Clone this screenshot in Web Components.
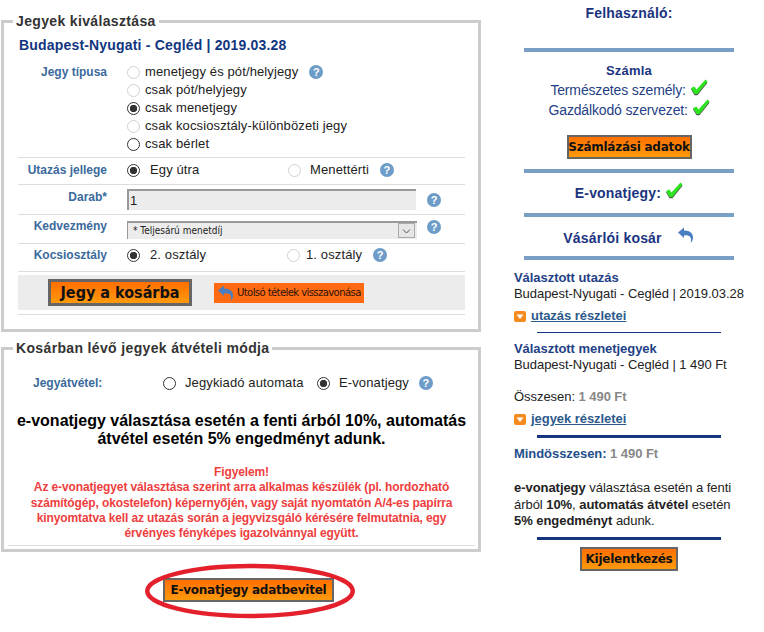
<!DOCTYPE html>
<html lang="hu">
<head>
<meta charset="utf-8">
<title>Jegyek</title>
<style>
    html, body { margin: 0; background: #fff; }
    body { font: 12px "Liberation Sans", Arial, sans-serif; color: #222; }
    ticket-page { width: 764px; height: 632px; }
</style>
</head>
<body>
<ticket-page>
    <ticket-panel legend="Jegyek kiválasztása" pad="14" style="height: 319px">
        <route-line>Budapest-Nyugati - Cegléd | 2019.03.28</route-line>
        <form-row label="Jegy típusa" height="104" top="9">
            <radio-list>
                <radio-item disabled>menetjegy és pót/helyjegy<help-icon style="margin-left:11px"></help-icon></radio-item>
                <radio-item disabled>csak pót/helyjegy</radio-item>
                <radio-item checked>csak menetjegy</radio-item>
                <radio-item disabled>csak kocsiosztály-különbözeti jegy</radio-item>
                <radio-item>csak bérlet</radio-item>
            </radio-list>
        </form-row>
        <form-row label="Utazás jellege" height="27" top="3">
            <radio-pair first="161">
                <radio-item checked gap="10" slot="a">Egy útra</radio-item>
                <radio-item disabled gap="9" slot="b">Menettérti<help-icon style="margin-left:11px"></help-icon></radio-item>
            </radio-pair>
        </form-row>
        <form-row label="Darab*" height="30" top="3">
            <fake-input>1</fake-input>
        </form-row>
        <form-row label="Kedvezmény" height="29" top="2">
            <fake-select>* Teljesárú menetdíj</fake-select>
        </form-row>
        <form-row label="Kocsiosztály" height="28" top="2">
            <radio-pair first="160">
                <radio-item checked gap="10" slot="a">2. osztály</radio-item>
                <radio-item disabled gap="6" slot="b">1. osztály<help-icon style="margin-left:11px"></help-icon></radio-item>
            </radio-pair>
        </form-row>
        <action-band>
            <orange-button size="big">Jegy a kosárba</orange-button>
            <undo-button>Utolsó tételek visszavonása</undo-button>
        </action-band>
    </ticket-panel>

    <ticket-panel legend="Kosárban lévő jegyek átvételi módja" pad="4" style="height: 212px; margin-top: 8px">
        <pickup-row>
            <radio-item gap="9" slot="a">Jegykiadó automata</radio-item>
            <radio-item checked gap="9" slot="b">E-vonatjegy<help-icon style="margin-left:10px"></help-icon></radio-item>
        </pickup-row>
        <discount-note>e-vonatjegy választása esetén a fenti árból 10%, automatás átvétel esetén 5% engedményt adunk.</discount-note>
        <warning-note>Figyelem!<br>Az e-vonatjegyet választása szerint arra alkalmas készülék (pl. hordozható számítógép, okostelefon) képernyőjén, vagy saját nyomtatón A/4-es papírra kinyomtatva kell az utazás során a jegyvizsgáló kérésére felmutatnia, egy érvényes fényképes igazolvánnyal együtt.</warning-note>
    </ticket-panel>

    <circled-action>
        <orange-button size="mid">E-vonatjegy adatbevitel</orange-button>
    </circled-action>

    <side-bar slot="side"></side-bar>
</ticket-page>

<script>
const ORANGE = 'linear-gradient(#ff6f00, #ff9a0c)';

class TicketPage extends HTMLElement {
    constructor() {
        super();
        this.attachShadow({ mode: 'open' }).innerHTML = `
            <style>
                :host { display: grid; grid-template-columns: 524px 210px; align-items: start; }
                .left { padding: 13px 0 0 1px; width: 480px; }
            </style>
            <div class="left"><slot></slot></div>
            <slot name="side"></slot>`;
    }
}

class TicketPanel extends HTMLElement {
    constructor() {
        super();
        const pad = Number(this.getAttribute('pad'));
        const right = pad === 14 ? 13 : 3;
        this.attachShadow({ mode: 'open' }).innerHTML = `
            <style>
                :host { display: block; box-sizing: border-box; }
                fieldset { margin: 0; height: 100%; box-sizing: border-box; border: 3px solid #ccc; padding: 0 ${right}px 0 ${pad}px; min-width: 0; }
                legend { margin-left: ${9 - pad}px; padding: 0 3px; font: bold 14px/17px "Liberation Sans", sans-serif; color: #333; letter-spacing: .35px; }
            </style>
            <fieldset><legend>${this.getAttribute('legend')}</legend><slot></slot></fieldset>`;
    }
}

class RouteLine extends HTMLElement {
    constructor() {
        super();
        this.attachShadow({ mode: 'open' }).innerHTML = `
            <style>
                :host { display: block; font: bold 14px/18px "Liberation Sans", sans-serif; color: #12357f; padding: 6px 0 0 1px; letter-spacing: .18px; }
            </style><slot></slot>`;
    }
}

class FormRow extends HTMLElement {
    constructor() {
        super();
        const h = this.getAttribute('height');
        const top = this.getAttribute('top') || 5;
        this.attachShadow({ mode: 'open' }).innerHTML = `
            <style>
                :host { display: grid; grid-template-columns: 89px 1fr; column-gap: 20px; box-sizing: border-box; height: ${h}px; border-bottom: 1px solid #ddd; padding-top: ${top}px; }
                .label { text-align: right; font: bold 12px/18px "Liberation Sans", sans-serif; color: #3b6a9c; }
            </style>
            <div class="label">${this.getAttribute('label')}</div>
            <div><slot></slot></div>`;
    }
}

class RadioList extends HTMLElement {
    constructor() {
        super();
        this.attachShadow({ mode: 'open' }).innerHTML = `
            <style>:host { display: flex; flex-direction: column; }</style><slot></slot>`;
    }
}

class RadioItem extends HTMLElement {
    constructor() {
        super();
        const off = this.hasAttribute('disabled');
        const on = this.hasAttribute('checked');
        const gap = this.getAttribute('gap') || 5;
        this.attachShadow({ mode: 'open' }).innerHTML = `
            <style>
                :host { display: flex; align-items: center; height: 18px; font: 13px/18px "Liberation Sans", sans-serif; color: #222; letter-spacing: .12px; white-space: nowrap; }
                i { flex: none; box-sizing: border-box; width: 13px; height: 13px; border-radius: 50%; margin-right: ${gap}px;
                    border: 1px solid ${off ? '#d0d0d0' : '#333'}; background: ${on ? 'radial-gradient(circle, #333 3.4px, #fff 4px)' : '#fff'}; }
            </style>
            <i></i><slot></slot>`;
    }
}

class RadioPair extends HTMLElement {
    constructor() {
        super();
        this.attachShadow({ mode: 'open' }).innerHTML = `
            <style>
                :host { display: grid; grid-template-columns: ${this.getAttribute('first')}px 1fr; }
            </style>
            <slot name="a"></slot><slot name="b"></slot>`;
    }
}

class HelpIcon extends HTMLElement {
    constructor() {
        super();
        this.attachShadow({ mode: 'open' }).innerHTML = `
            <style>
                :host { display: inline-flex; align-items: center; justify-content: center; width: 14px; height: 14px; border-radius: 50%; background: #6e9cc8; color: #fff; font: bold 11px/14px "Liberation Sans", sans-serif; flex: none; }
            </style>?`;
    }
}

class FakeInput extends HTMLElement {
    constructor() {
        super();
        this.attachShadow({ mode: 'open' }).innerHTML = `
            <style>
                :host { display: flex; align-items: center; gap: 11px; margin-top: 1px; }
                div { box-sizing: border-box; width: 289px; height: 21px; background: #ececec; border-top: 2px solid #999; border-left: 2px solid #999; padding: 3px 1px 0; font: 13px/14px "Liberation Sans", sans-serif; color: #222; }
            </style>
            <div><slot></slot></div><help-icon></help-icon>`;
    }
}

class FakeSelect extends HTMLElement {
    constructor() {
        super();
        this.attachShadow({ mode: 'open' }).innerHTML = `
            <style>
                :host { display: flex; align-items: flex-start; gap: 10px; margin-top: 4px; }
                div { box-sizing: border-box; width: 290px; height: 18px; background: #ececec; border-top: 2px solid #999; border-left: 1px solid #999; display: flex; justify-content: space-between; padding-left: 5px; font: 10px/16px "DejaVu Sans Condensed", "DejaVu Sans", sans-serif; font-stretch: condensed; color: #222; }
                b { box-sizing: border-box; width: 17px; height: 15px; margin-right: 2px; border: 1px solid #a9a9a9; background: #e6e6e6; display: flex; align-items: center; justify-content: center; }
                help-icon { margin-top: -1px; }
            </style>
            <div><span><slot></slot></span><b><svg width="9" height="6" viewBox="0 0 9 6"><path d="M1 1.5l3.5 3.5 3.5-3.5" fill="none" stroke="#555" stroke-width="1"/></svg></b></div><help-icon></help-icon>`;
    }
}

class ActionBand extends HTMLElement {
    constructor() {
        super();
        this.attachShadow({ mode: 'open' }).innerHTML = `
            <style>
                :host { display: flex; align-items: center; gap: 22px; height: 35px; margin-top: 3px; padding-left: 30px; background: #ececec; box-shadow: 0 4px 0 #fff, 0 5px 0 #ddd; }
            </style>
            <slot></slot>`;
    }
}

class OrangeButton extends HTMLElement {
    constructor() {
        super();
        const big = this.getAttribute('size') === 'big';
        const mid = this.getAttribute('size') === 'mid';
        const w = big ? 144 : mid ? 171 : this.getAttribute('width') || 98;
        const h = big ? 27 : 24;
        const type = big
            ? 'bold 16px "DejaVu Sans Condensed", "DejaVu Sans", sans-serif; font-stretch: condensed'
            : 'bold 12px "DejaVu Sans", sans-serif; letter-spacing: -.25px';
        this.attachShadow({ mode: 'open' }).innerHTML = `
            <style>
                :host { display: inline-flex; align-items: center; justify-content: center; box-sizing: border-box; width: ${w}px; height: ${h}px; border: ${big ? 3 : 2}px solid #666; background: ${ORANGE}; color: #111; white-space: nowrap;
                    font: ${type}; }
            </style>
            <slot></slot>`;
    }
}

class UndoButton extends HTMLElement {
    constructor() {
        super();
        this.attachShadow({ mode: 'open' }).innerHTML = `
            <style>
                :host { display: inline-flex; align-items: center; box-sizing: border-box; width: 150px; height: 20px; background: #ff6a13; color: #2a1408; padding-left: 3px; white-space: nowrap; font: 11.2px "DejaVu Sans Condensed", "DejaVu Sans", sans-serif; font-stretch: condensed; letter-spacing: -.6px; }
                undo-icon { margin-right: 2px; }
            </style>
            <undo-icon size="18"></undo-icon><slot></slot>`;
    }
}

class UndoIcon extends HTMLElement {
    constructor() {
        super();
        const s = this.getAttribute('size') || 18;
        this.attachShadow({ mode: 'open' }).innerHTML = `
            <style>:host { display: inline-flex; flex: none; }</style>
            <svg width="${s}" height="${s}" viewBox="0 0 18 18">
                <path d="M1 6.5L7 1.5V4.6C12.8 4.4 16.6 7.6 16 12.6C15.7 14.6 14.8 16 13.6 16.8C14.4 14.6 14.4 12.4 13 10.8C11.8 9.5 9.6 9 7 9.4V12Z" fill="#4a7ec0"/>
            </svg>`;
    }
}

class PickupRow extends HTMLElement {
    constructor() {
        super();
        this.attachShadow({ mode: 'open' }).innerHTML = `
            <style>
                :host { display: flex; align-items: center; height: 18px; margin-top: 17px; padding-left: 25px; }
                .label { width: 130px; font: bold 12px/14px "Liberation Sans", sans-serif; color: #3b6a9c; }
                .a { width: 154px; }
            </style>
            <div class="label">Jegyátvétel:</div>
            <div class="a"><slot name="a"></slot></div>
            <div><slot name="b"></slot></div>`;
    }
}

class DiscountNote extends HTMLElement {
    constructor() {
        super();
        this.attachShadow({ mode: 'open' }).innerHTML = `
            <style>
                :host { display: block; margin-top: 20px; text-align: center; font: bold 16px/18px "Liberation Sans", sans-serif; color: #000; }
            </style><slot></slot>`;
    }
}

class WarningNote extends HTMLElement {
    constructor() {
        super();
        this.attachShadow({ mode: 'open' }).innerHTML = `
            <style>
                :host { display: block; box-sizing: border-box; margin: 17px 0 0; padding: 0 15px 4px; text-align: center; font: bold 12px/15.3px "Liberation Sans", sans-serif; letter-spacing: -.12px; color: #ee3e3e; border-bottom: 1px solid #ddd; }
            </style><slot></slot>`;
    }
}

class CircledAction extends HTMLElement {
    constructor() {
        super();
        this.attachShadow({ mode: 'open' }).innerHTML = `
            <style>
                :host { display: flex; justify-content: center; position: relative; padding: 26px 0 0 15px; }
                svg { position: absolute; left: 142px; top: 10.5px; }
            </style>
            <slot></slot>
            <svg width="214" height="57" viewBox="0 0 214 57">
                <ellipse cx="107" cy="28" rx="102.75" ry="25" fill="none" stroke="#e3202c" stroke-width="4.5"/>
            </svg>`;
    }
}

class GreenCheck extends HTMLElement {
    constructor() {
        super();
        this.attachShadow({ mode: 'open' }).innerHTML = `
            <style>:host { display: inline-flex; vertical-align: -1px; margin: -6px 0; }</style>
            <svg width="18" height="18" viewBox="0 0 18 18">
                <path d="M1 10L4.5 8.5L6.5 11.5L15.5 1.5L17.5 3.5L7.5 16H4.5Z" fill="#4b5b4b" transform="translate(0 1.2)"/>
                <path d="M1 10L4.5 8.5L6.5 11.5L15.5 1.5L17.5 3.5L7.5 16H4.5Z" fill="#2ee31f"/>
            </svg>`;
    }
}

class SideBar extends HTMLElement {
    constructor() {
        super();
        const arrow = `<svg width="12" height="11" viewBox="0 0 12 11"><rect width="12" height="11" rx="2" fill="#f58a1f"/><path d="M2.5 3.5h7L6 8Z" fill="#fff"/></svg>`;
        this.attachShadow({ mode: 'open' }).innerHTML = `
            <style>
                :host { display: block; width: 210px; font: 13px/16px "Liberation Sans", sans-serif; color: #222; }
                .bar { height: 4px; background: #789fc4; }
                .c { text-align: center; color: #1a3480; }
                h4 { margin: 0; font: bold 13px/16px "Liberation Sans", sans-serif; color: #1a3480; letter-spacing: .2px; }
                .big { font-size: 14px; }
                .user { height: 48px; padding-top: 5px; box-sizing: border-box; }
                .bill { padding-top: 11px; height: 117px; box-sizing: border-box; }
                .line { font-size: 14px; line-height: 20px; letter-spacing: -.15px; color: #1f3f86; }
                .line:first-of-type { margin-top: 1px; }
                .bill orange-button { margin-top: 15px; }
                .cart { display: flex; justify-content: center; gap: 15px; align-items: center; height: 39px; box-sizing: border-box; padding-top: 2px; }
                .cart undo-icon { margin-top: -6px; }
                .items { margin: 0 -10px; padding-top: 10px; white-space: nowrap; letter-spacing: -.05px; }
                .items h5 { margin: 0; font: bold 13px/16px "Liberation Sans", sans-serif; color: #1f3f86; }
                .link { display: flex; align-items: center; gap: 5px; margin-top: 6px; height: 16px; font: bold 13px/16px "Liberation Sans", sans-serif; color: #2d5a8c; text-decoration: underline; }
                .rule { margin: 8px 23px 0; background: #15357f; }
                .gray { color: #888; font-weight: bold; }
                .sum { font-weight: bold; color: #1f4f8c; }
                .note { line-height: 16.5px; margin-top: 18px; }
            </style>
            <div class="user c"><h4 class="big">Felhasználó:</h4></div>
            <div class="bar"></div>
            <div class="bill c">
                <h4>Számla</h4>
                <div class="line">Természetes személy: <green-check></green-check></div>
                <div class="line">Gazdálkodó szervezet: <green-check></green-check></div>
                <orange-button width="125">Számlázási adatok</orange-button>
            </div>
            <div class="bar"></div>
            <div class="c" style="height: 40px; display: flex; align-items: center; justify-content: center"><h4 class="big">E-vonatjegy: <green-check></green-check></h4></div>
            <div class="bar"></div>
            <div class="cart c"><h4 class="big">Vásárlói kosár</h4><undo-icon></undo-icon></div>
            <div class="bar"></div>
            <div class="items">
                <h5>Választott utazás</h5>
                <div>Budapest-Nyugati - Cegléd | 2019.03.28</div>
                <div class="link">${arrow}<span>utazás részletei</span></div>
                <div class="rule" style="height: 1px"></div>
                <h5 style="margin-top: 8px">Választott menetjegyek</h5>
                <div>Budapest-Nyugati - Cegléd | 1 490 Ft</div>
                <div style="margin-top: 16px">Összesen: <span class="gray">1 490 Ft</span></div>
                <div class="link">${arrow}<span>jegyek részletei</span></div>
                <div class="rule" style="height: 3px"></div>
                <div style="margin-top: 8px"><span class="sum">Mindösszesen:</span> <span class="gray">1 490 Ft</span></div>
                <div class="note"><b>e-vonatjegy</b> választása esetén a fenti<br>árból <b>10%</b>, <b>automatás átvétel</b> esetén<br><b>5% engedményt</b> adunk.</div>
                <div class="rule" style="height: 3px; margin-top: 7px"></div>
                <div class="c" style="margin-top: 7px"><orange-button>Kijelentkezés</orange-button></div>
            </div>`;
    }
}

customElements.define('help-icon', HelpIcon);
customElements.define('undo-icon', UndoIcon);
customElements.define('green-check', GreenCheck);
customElements.define('orange-button', OrangeButton);
customElements.define('undo-button', UndoButton);
customElements.define('radio-item', RadioItem);
customElements.define('radio-list', RadioList);
customElements.define('radio-pair', RadioPair);
customElements.define('fake-input', FakeInput);
customElements.define('fake-select', FakeSelect);
customElements.define('route-line', RouteLine);
customElements.define('form-row', FormRow);
customElements.define('action-band', ActionBand);
customElements.define('pickup-row', PickupRow);
customElements.define('discount-note', DiscountNote);
customElements.define('warning-note', WarningNote);
customElements.define('circled-action', CircledAction);
customElements.define('ticket-panel', TicketPanel);
customElements.define('side-bar', SideBar);
customElements.define('ticket-page', TicketPage);
</script>
</body>
</html>
